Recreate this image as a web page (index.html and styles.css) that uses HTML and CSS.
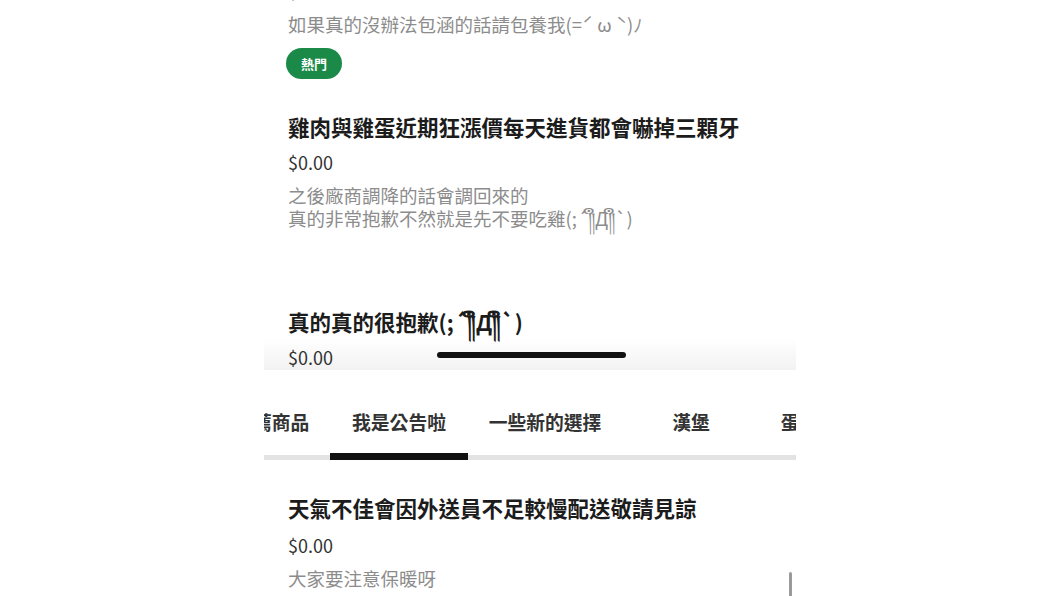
FILE: index.html
```html
<!DOCTYPE html>
<html lang="zh-Hant">
<head>
    <meta charset="UTF-8">
    <meta name="viewport" content="width=device-width, initial-scale=1.0">
    <title>菜單</title>
    <link rel="stylesheet" href="styles.css">
</head>
<body>
    <div class="phone">

        <div class="shot shot-top">
            <div class="list">
                <div class="item">
                    <div class="price">$0.00</div>
                    <div class="desc">如果真的沒辦法包涵的話請包養我(=ˊ ω ˋ)ﾉ</div>
                    <span class="badge">熱門</span>
                </div>

                <div class="item spaced">
                    <div class="title">雞肉與雞蛋近期狂漲價每天進貨都會嚇掉三顆牙</div>
                    <div class="price">$0.00</div>
                    <div class="desc">之後廠商調降的話會調回來的<br>真的非常抱歉不然就是先不要吃雞(;´༎ຶД༎ຶ`)</div>
                </div>

                <div class="item">
                    <div class="title">真的真的很抱歉(;´༎ຶД༎ຶ`)</div>
                    <div class="price">$0.00</div>
                </div>
            </div>
            <div class="fade"></div>
            <div class="home-bar"></div>
        </div>

        <div class="shot shot-bottom">
            <div class="tabbar">
                <div class="tab-row">
                    <div class="tab">人氣推薦商品</div>
                    <div class="tab active">我是公告啦</div>
                    <div class="tab">一些新的選擇</div>
                    <div class="tab">漢堡</div>
                    <div class="tab">蛋餅和蘿蔔糕</div>
                </div>
            </div>

            <div class="item">
                <div class="title">天氣不佳會因外送員不足較慢配送敬請見諒</div>
                <div class="price">$0.00</div>
                <div class="desc">大家要注意保暖呀</div>
            </div>
            <div class="scrollbar"></div>
        </div>

    </div>
</body>
</html>
```

FILE: styles.css
```css
body {
    margin: 0;
    background: #fff;
    font-family: "Noto Sans CJK TC", "Noto Sans", sans-serif;
    color: #222;
}

.phone {
    width: 532px;
    margin: 0 auto;
}

.shot {
    position: relative;
    overflow: hidden;
}

.shot-top {
    height: 370px;
}

.shot-bottom {
    height: 226px;
}

.list {
    margin-top: -55px;
}

.item {
    padding: 34px 24px 0;
}

.item.spaced {
    padding-bottom: 44px;
}

.title {
    font-size: 21.5px;
    line-height: 28px;
    font-weight: 700;
    color: #1c1c1c;
}

.price {
    margin-top: 9px;
    font-size: 18px;
    line-height: 24px;
    color: #333;
}

.list .item:first-child .price {
    margin-top: 0;
    color: #aaa;
}

.desc {
    margin-top: 10px;
    font-size: 18.5px;
    line-height: 23px;
    color: #8c8c8c;
}

.list .item:first-child .desc {
    margin-top: 10px;
}

.badge {
    display: inline-block;
    margin-top: 12px;
    margin-left: -2px;
    width: 56px;
    height: 31px;
    line-height: 31px;
    border-radius: 16px;
    background: #1b8a49;
    color: #fff;
    font-size: 13px;
    font-weight: 700;
    text-align: center;
}

.fade {
    position: absolute;
    left: 0;
    right: 0;
    bottom: 0;
    height: 32px;
    background: linear-gradient(rgba(0, 0, 0, 0), rgba(0, 0, 0, 0.05));
}

.home-bar {
    position: absolute;
    bottom: 12px;
    left: 50%;
    margin-left: -93px;
    width: 189px;
    height: 6px;
    border-radius: 3px;
    background: #111;
}

.tabbar {
    overflow: hidden;
    background: linear-gradient(#e3e3e3, #e3e3e3) left bottom / 100% 5px no-repeat;
}

.tab-row {
    display: flex;
    margin-left: -84px;
}

.tab {
    position: relative;
    flex: 0 0 146px;
    padding: 39px 0 25px;
    font-size: 18.8px;
    line-height: 26px;
    font-weight: 700;
    color: #333;
    text-align: center;
    white-space: nowrap;
}

.tab.active::after {
    content: "";
    position: absolute;
    left: 4px;
    right: 4px;
    bottom: 0;
    height: 7px;
    background: #111;
}

.shot-bottom .price {
    margin-top: 11px;
}

.scrollbar {
    position: absolute;
    top: 202px;
    right: 4px;
    width: 3px;
    height: 30px;
    border-radius: 2px;
    background: #9a9a9a;
}
```
